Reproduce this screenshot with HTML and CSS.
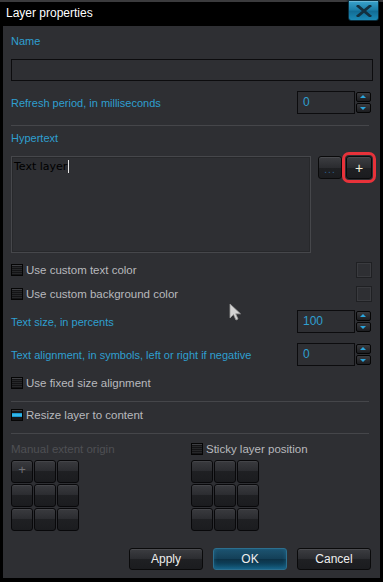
FILE: index.html
```html
<!DOCTYPE html>
<html lang="en">
<head>
    <meta charset="UTF-8">
    <meta name="viewport" content="width=device-width, initial-scale=1.0">
    <title>Layer properties</title>
    <link rel="stylesheet" href="styles.css">
</head>
<body>
    <div class="window">
        <div class="titlebar">
            <span class="title">Layer properties</span>
            <button class="close" aria-label="Close">
                <svg width="16" height="12" viewBox="0 0 16 12">
                    <path d="M2 1 L14 11 M14 1 L2 11" stroke="#13303f" stroke-width="2.8" stroke-linecap="square"/>
                </svg>
            </button>
        </div>

        <div class="content">
            <div class="label">Name</div>
            <input class="field" type="text">

            <div class="row">
                <span class="label">Refresh period, in milliseconds</span>
                <div class="spin">
                    <span class="spin-value">0</span>
                    <div class="spin-btns">
                        <span class="spin-btn up"></span>
                        <span class="spin-btn down"></span>
                    </div>
                </div>
            </div>

            <div class="sep"></div>

            <div class="label hyper-label">Hypertext</div>
            <div class="hyper">
                <div class="textbox">Text layer<span class="caret"></span></div>
                <button class="btn small dots">...</button>
                <button class="btn small plus">+</button>
            </div>

            <div class="row check-row first">
                <label class="check"><span class="box"></span>Use custom text color</label>
                <span class="swatch"></span>
            </div>
            <div class="row check-row">
                <label class="check"><span class="box"></span>Use custom background color</label>
                <span class="swatch"></span>
            </div>

            <div class="row size-row">
                <span class="label">Text size, in percents</span>
                <div class="spin">
                    <span class="spin-value">100</span>
                    <div class="spin-btns">
                        <span class="spin-btn up"></span>
                        <span class="spin-btn down"></span>
                    </div>
                </div>
            </div>

            <div class="row align-row">
                <span class="label">Text alignment, in symbols, left or right if negative</span>
                <div class="spin">
                    <span class="spin-value">0</span>
                    <div class="spin-btns">
                        <span class="spin-btn up"></span>
                        <span class="spin-btn down"></span>
                    </div>
                </div>
            </div>

            <div class="row check-row fixed">
                <label class="check"><span class="box"></span>Use fixed size alignment</label>
            </div>

            <div class="sep sep-b"></div>

            <div class="row check-row resize">
                <label class="check"><span class="box on"></span>Resize layer to content</label>
            </div>

            <div class="sep sep-c"></div>

            <div class="origin">
                <div class="col">
                    <div class="check disabled">Manual extent origin</div>
                    <div class="grid">
                        <span class="cell">+</span><span class="cell"></span><span class="cell"></span>
                        <span class="cell"></span><span class="cell"></span><span class="cell"></span>
                        <span class="cell"></span><span class="cell"></span><span class="cell"></span>
                    </div>
                </div>
                <div class="col">
                    <label class="check"><span class="box"></span>Sticky layer position</label>
                    <div class="grid">
                        <span class="cell"></span><span class="cell"></span><span class="cell"></span>
                        <span class="cell"></span><span class="cell"></span><span class="cell"></span>
                        <span class="cell"></span><span class="cell"></span><span class="cell"></span>
                    </div>
                </div>
            </div>

            <div class="footer">
                <button class="btn wide">Apply</button>
                <button class="btn wide ok">OK</button>
                <button class="btn wide">Cancel</button>
            </div>

            <svg class="pointer" width="14" height="19" viewBox="0 0 14 19">
                <path d="M1 1 L1 15 L4.5 11.5 L7 17 L9 16 L6.7 10.8 L11.5 10.8 Z" fill="#d4d4d4" stroke="#9a9a9a" stroke-width="0.8"/>
            </svg>
        </div>
    </div>
</body>
</html>
```

FILE: styles.css
```css
body {
    margin: 0;
    background-color: #000;
    font-family: "Liberation Sans", Arial, sans-serif;
    font-size: 11px;
}
.window {
    width: 383px;
    height: 582px;
    background-color: #000;
    display: flex;
    flex-direction: column;
}
.titlebar {
    height: 24px;
    border-top: 2px solid #3b3b3d;
    display: flex;
    align-items: flex-start;
    position: relative;
}
.title {
    color: #fff;
    font-size: 12px;
    margin: 4px 0 0 6px;
}
.close {
    position: absolute;
    top: -2px;
    right: 4px;
    width: 31px;
    height: 21px;
    padding: 0;
    border: 1px solid #0b2e3e;
    border-radius: 0 0 3px 3px;
    background: linear-gradient(#3aa3cc, #1c80aa 45%, #126d96 55%, #1b8ab6);
    box-shadow: 0 0 3px #000, inset 0 1px 0 rgba(255, 255, 255, 0.25);
    display: flex;
    align-items: center;
    justify-content: center;
}
.content {
    position: relative;
    flex: 1;
    margin: 0 3px 4px 3px;
    background-color: #2e2f33;
    padding: 7px 7px 0 8px;
    display: flex;
    flex-direction: column;
}
.label {
    color: #2f9fd0;
    height: 16px;
    line-height: 16px;
}
.field {
    margin: 10px 0 0 0;
    height: 22px;
    box-sizing: border-box;
    border: 1px solid #0c0c0e;
    background-color: #2e2f33;
    padding: 0;
}
.row {
    display: flex;
    align-items: center;
    justify-content: space-between;
    margin-top: 10px;
}
.spin {
    display: flex;
    margin-right: 2px;
    height: 23px;
}
.spin-value {
    width: 58px;
    box-sizing: border-box;
    border: 1px solid #0c0c0e;
    color: #2f9fd0;
    padding: 3px 0 0 5px;
    font-size: 12px;
}
.spin-btns {
    display: flex;
    flex-direction: column;
    justify-content: space-between;
    padding: 1px 0;
    margin-left: 1px;
}
.spin-btn {
    width: 15px;
    height: 10px;
    box-sizing: border-box;
    border: 1px solid #050505;
    border-radius: 2px;
    background: linear-gradient(#3a3b3f, #1c1d20);
    position: relative;
}
.spin-btn::after {
    content: "";
    position: absolute;
    left: 3px;
    width: 0;
    height: 0;
    border-left: 3.5px solid transparent;
    border-right: 3.5px solid transparent;
}
.spin-btn.up::after {
    top: 2px;
    border-bottom: 3px solid #2aa6de;
}
.spin-btn.down::after {
    top: 3px;
    border-top: 3px solid #2aa6de;
}
.sep {
    height: 1px;
    background-color: #45464a;
    margin: 11px 4px 0 0;
}
.hyper-label {
    margin-top: 4px;
}
.hyper {
    display: flex;
    align-items: flex-start;
    margin-top: 10px;
    height: 97px;
}
.textbox {
    width: 300px;
    height: 97px;
    box-sizing: border-box;
    border: 1px solid #46474b;
    box-shadow: inset 0 0 0 1px #27282b;
    color: #000;
    font-family: "DejaVu Sans", sans-serif;
    font-size: 11px;
    padding: 3px 0 0 2px;
}
.caret {
    display: inline-block;
    width: 1px;
    height: 13px;
    background-color: #e8e8e8;
    vertical-align: -3px;
    margin-left: 1px;
}
.btn {
    border: 1px solid #0a0a0b;
    border-radius: 3px;
    background: linear-gradient(#3c3d41, #2b2c30 50%, #1f2023 52%, #1b1c1f);
    box-shadow: inset 0 1px 0 rgba(255, 255, 255, 0.08);
    color: #eee;
    font-family: "Liberation Sans", Arial, sans-serif;
    font-size: 12px;
    padding: 0;
}
.small {
    width: 24px;
    height: 23px;
}
.dots {
    margin-left: 7px;
    color: #2c5f92;
    font-size: 10px;
    letter-spacing: 1px;
    padding-top: 3px;
}
.plus {
    margin-left: 4px;
    width: 26px;
    color: #f4f0d8;
    font-size: 14px;
    outline: 3px solid #e8323a;
    outline-offset: 1px;
}
.check-row {
    margin-top: 8px;
    height: 16px;
}
.check-row.first {
    margin-top: 9px;
}
.check {
    display: flex;
    align-items: center;
    color: #b8b9bd;
    height: 16px;
    font-size: 11.5px;
}
.box {
    width: 12px;
    height: 12px;
    box-sizing: border-box;
    border: 1px solid #050505;
    background: repeating-linear-gradient(#262729 0, #262729 1px, #141416 1px, #141416 2px);
    margin-right: 3px;
    box-shadow: inset 0 1px 0 #3e3f43;
}
.box.on {
    background: linear-gradient(#151618 0, #151618 3px, #0e86c4 3px, #3fc7f3 5px, #0e86c4 7px, #151618 7px);
}
.swatch {
    width: 16px;
    height: 16px;
    box-sizing: border-box;
    border: 1px solid #1f2023;
    box-shadow: inset 0 0 0 1px #3a3b3f;
    margin-right: 1px;
}
.size-row {
    margin-top: 8px;
}
.fixed {
    margin-top: 9px;
}
.sep-b {
    margin-top: 10px;
}
.resize {
    margin-top: 5px;
}
.sep-c {
    margin-top: 10px;
}
.origin {
    display: grid;
    grid-template-columns: 180px auto;
    margin-top: 7px;
}
.disabled {
    color: #4f5054;
}
.grid {
    display: grid;
    grid-template-columns: repeat(3, 22px);
    grid-auto-rows: 23px;
    gap: 1px;
    margin-top: 3px;
}
.cell {
    box-sizing: border-box;
    border: 1px solid #08080a;
    border-radius: 3px;
    background: linear-gradient(#3a3b3f, #2c2d31 45%, #1f2023 50%, #1b1c1f);
    box-shadow: inset 0 1px 0 rgba(255, 255, 255, 0.06);
    color: #6f7074;
    font-size: 13px;
    text-align: center;
    line-height: 18px;
}
.footer {
    display: flex;
    justify-content: flex-end;
    gap: 10px;
    margin: 17px 2px 0 0;
}
.wide {
    width: 74px;
    height: 22px;
}
.ok {
    border-color: #2c6f8f;
    background: linear-gradient(#1d5470, #133f57 50%, #0c3247 52%, #11506f);
    box-shadow: inset 0 -2px 4px rgba(40, 150, 200, 0.35);
}
.pointer {
    position: absolute;
    left: 226px;
    top: 277px;
}
```
